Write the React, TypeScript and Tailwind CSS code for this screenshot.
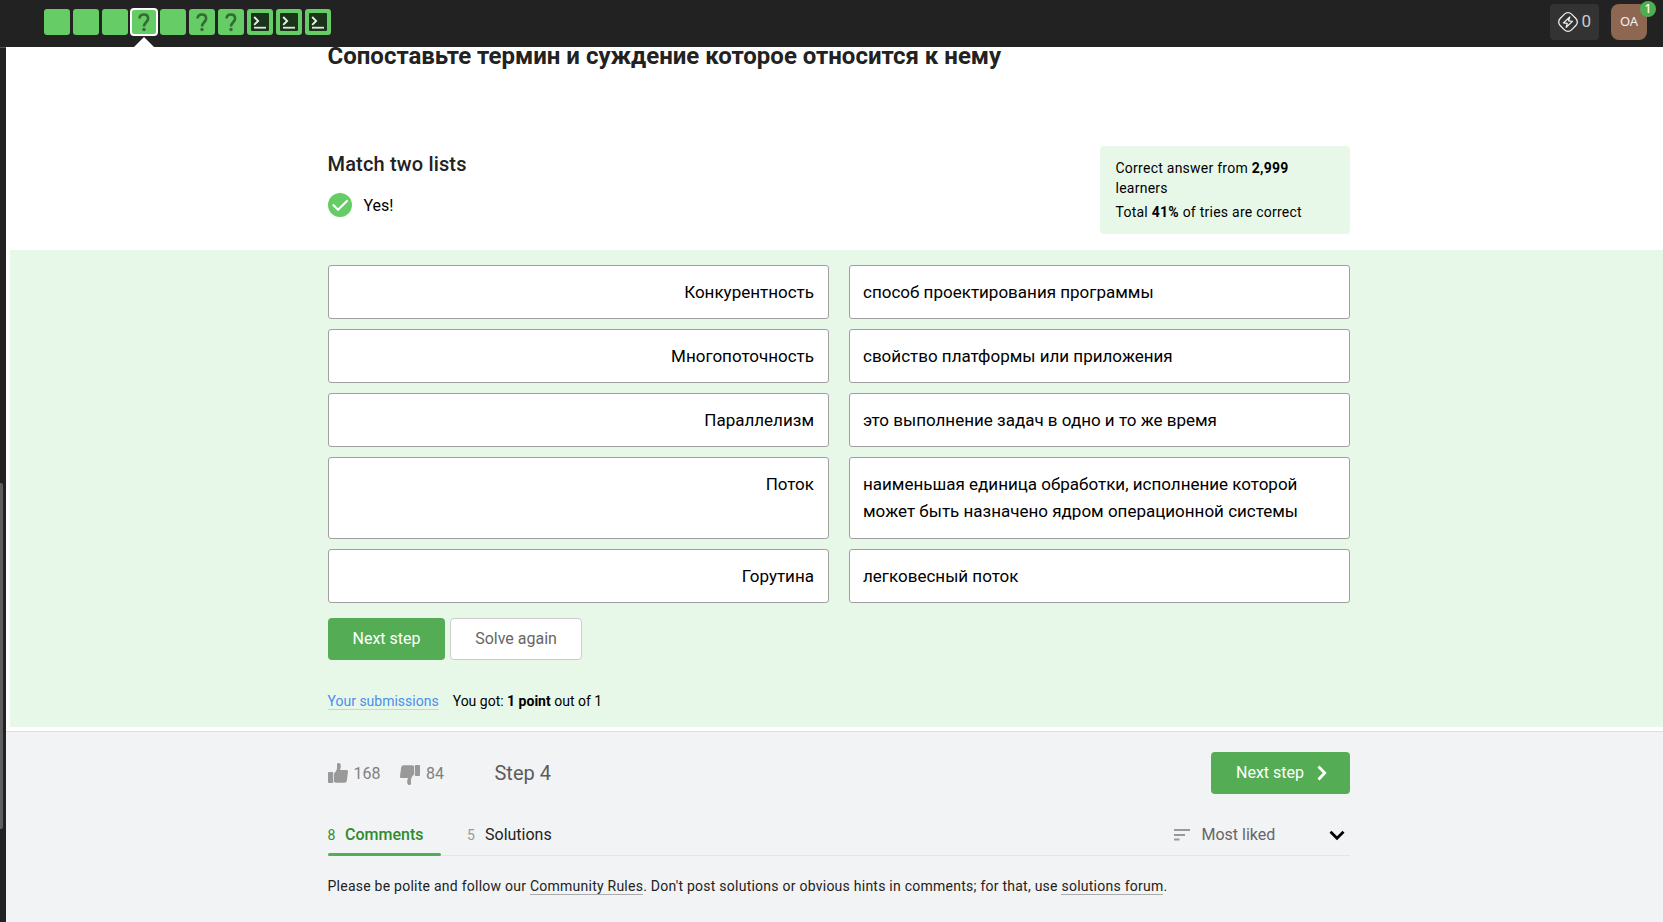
import type { ReactNode } from 'react';

type StepKind = 'text' | 'quiz' | 'code';

const steps: { kind: StepKind; active?: boolean }[] = [
  { kind: 'text' },
  { kind: 'text' },
  { kind: 'text' },
  { kind: 'quiz', active: true },
  { kind: 'text' },
  { kind: 'quiz' },
  { kind: 'quiz' },
  { kind: 'code' },
  { kind: 'code' },
  { kind: 'code' },
];

const pairs = [
  ['Конкурентность', 'способ проектирования программы'],
  ['Многопоточность', 'свойство платформы или приложения'],
  ['Параллелизм', 'это выполнение задач в одно и то же время'],
  ['Поток', 'наименьшая единица обработки, исполнение которой может быть назначено ядром операционной системы'],
  ['Горутина', 'легковесный поток'],
];

function StepIcon({ kind }: { kind: StepKind }) {
  if (kind === 'quiz') {
    return (
      <svg width="26" height="26" viewBox="0 0 26 26" fill="none" stroke="#336b33" strokeWidth="2.600">
        <path d="M8.600 9.600C8.600 6.900 10.200 5.500 12.900 5.500s4.200 1.400 4.200 3.900c0 3.700-4.100 4-4.100 8.100" />
        <circle cx="13" cy="20.500" r="1.700" fill="#336b33" stroke="none" />
      </svg>
    );
  }
  if (kind === 'code') {
    return (
      <svg width="26" height="26" viewBox="0 0 26 26" fill="none">
        <rect x="4" y="4" width="18" height="18" rx="1" fill="#1a3319" />
        <path d="M7.200 8l3.900 3.900-3.900 3.900" stroke="#e9f3e9" strokeWidth="1.900" />
        <path d="M7 18.700h12" stroke="#dfe8df" strokeWidth="1.800" />
      </svg>
    );
  }
  return null;
}

function StepTile({ kind, active }: { kind: StepKind; active?: boolean }) {
  return (
    <div
      className={
        active
          ? 'relative size-[26px] rounded-[3px] bg-[#66cc66] outline-2 -outline-offset-1 outline-white'
          : 'size-[26px] rounded-[3px] bg-[#66cc66]'
      }
    >
      <StepIcon kind={kind} />
      {active && (
        <svg className="absolute top-[28px] left-[3px]" width="20" height="10" viewBox="0 0 20 10">
          <path d="M0 10L10 0l10 10z" fill="#fff" />
        </svg>
      )}
    </div>
  );
}

function Thumb({ down }: { down?: boolean }) {
  return (
    <svg
      width="20"
      height="20"
      viewBox="0 0 20 20"
      fill="#999"
      className={down ? 'mt-[3px] rotate-180' : ''}
    >
      <path d="M1 9h3.400a.8.8 0 0 1 .8.800v9.400a.8.8 0 0 1-.8.800H1a1 1 0 0 1-1-1v-9a1 1 0 0 1 1-1z" />
      <path d="M6 10.400c1.800-1.600 3-3.400 3-5.400V1.500C9 .5 9.800 0 10.700 0c1.400 0 2.100 1.300 2.100 3 0 1.700-.5 3.200-.8 4h6.500c1 0 1.600.8 1.500 1.700l-1.200 9c-.2 1.200-1 2-2.200 2H8.500c-1 0-1.700-.3-2.500-.8z" />
    </svg>
  );
}

function Link({ children }: { children: ReactNode }) {
  return <a className="border-b border-[#aaabad]">{children}</a>;
}

export default function App() {
  return (
    <div className="flex h-[922px] w-[1663px] flex-col overflow-hidden bg-white font-['Roboto',sans-serif] text-[#222]">
      <header className="flex h-[47px] shrink-0 items-start justify-between bg-[#222] pr-4 pl-11">
        <nav className="flex gap-[3px] pt-[9px]">
          {steps.map((s, i) => (
            <StepTile key={i} kind={s.kind} active={s.active} />
          ))}
        </nav>
        <div className="flex gap-3 pt-1">
          <div className="flex h-9 w-[49px] items-center gap-[3.5px] rounded bg-[#333] pl-2 text-[#ccc]">
            <svg width="20" height="20" viewBox="0 0 20 20" fill="none" stroke="#eee" strokeWidth="1.300" strokeLinejoin="round">
              <rect x="1.950" y="1.950" width="16.100" height="16.100" rx="5" transform="rotate(45 10 10)" />
              <path d="M11.800 5L5.400 10.900l3.800.5L8.200 15.300l6.200-5.900-3.800-.5z" />
            </svg>
            <span className="text-[17px]">0</span>
          </div>
          <div className="relative flex size-9 items-center justify-center rounded-lg bg-[#8d6752] font-['Noto_Sans',sans-serif] text-[13px] text-[#f4f0ee]">
            OA
            <span className="absolute -top-[3px] -right-[9px] flex size-4 items-center justify-center rounded-full bg-[#4caf50] text-[12px] font-medium text-white">
              1
            </span>
          </div>
        </div>
      </header>

      <div className="flex min-h-0 flex-1">
        <aside className="w-[6px] shrink-0 border-t border-[#555] bg-[#222] pt-[435px]">
          <div className="h-[346px] w-[3px] rounded-r-[2px] bg-[#5e5e5e]" />
        </aside>

        <main className="flex min-w-0 flex-1 flex-col">
          <section className="flex h-[203px] justify-between pr-[313.5px] pl-[321.5px]">
            <div>
              <h1 className="-mt-[7px] text-[24px] leading-8 font-bold">
                Сопоставьте термин и суждение которое относится к нему
              </h1>
              <h2 className="mt-[78px] text-xl leading-[28px] font-medium tracking-[0.16px]">Match two lists</h2>
              <div className="mt-[14px] flex items-center gap-3 text-base text-black">
                <svg width="24" height="24" viewBox="0 0 25 25" fill="none">
                  <circle cx="12.500" cy="12.500" r="12.500" fill="#66cc66" />
                  <path d="M5 12l5.500 5.500L20.500 7.500" stroke="#fff" strokeWidth="2.200" />
                </svg>
                <span className="pt-[2px]">Yes!</span>
              </div>
            </div>
            <div className="mt-[99px] h-[88px] w-[250px] shrink-0 rounded bg-[#e7f8e9] px-4 pt-3 text-sm leading-5 tracking-[0.25px] text-black">
              <p>
                Correct answer from <b>2,999</b> learners
              </p>
              <p className="mt-1">
                Total <b>41%</b> of tries are correct
              </p>
            </div>
          </section>

          <section className="ml-1 flex h-[477px] flex-col bg-[#e7f8e9] pt-[15px] pr-[313px] pl-[317.5px] text-black">
            <div className="flex flex-col gap-[10px] pl-[0.5px]">
              {pairs.map(([term, text]) => (
                <div
                  key={term}
                  className={`grid grid-cols-2 gap-5 text-[17px] leading-[27px] ${text.length > 60 ? 'h-[82px]' : 'h-[54px]'}`}
                >
                  <div className="rounded-[3px] border border-[#a0a0a0] bg-white px-[14px] pt-[13px] text-right">
                    {term}
                  </div>
                  <div className="rounded-[3px] border border-[#a0a0a0] bg-white px-[13px] pt-[13px]">
                    {text}
                  </div>
                </div>
              ))}
            </div>
            <div className="mt-[15px] flex gap-[5px] pl-[0.5px] text-base">
              <button className="h-[42px] w-[117px] rounded bg-[#54ad54] text-white">Next step</button>
              <button className="h-[42px] w-[132px] rounded border border-[#ccc] bg-white text-[#666]">Solve again</button>
            </div>
            <div className="mt-[31px] flex gap-[14px] text-sm">
              <a className="h-[19px] border-b border-[#b5dcea] text-[#4c8dec]">Your submissions</a>
              <span>
                You got: <b>1 point</b> out of 1
              </span>
            </div>
          </section>

          <footer className="mt-1 flex-1 border-t border-[#dcdde0] bg-[#f2f3f5] pr-[313px] pl-[321.5px]">
            <div className="mt-5 flex h-[42px] items-center">
              <Thumb />
              <span className="ml-[6px] pt-[2px] text-base text-[#808080]">168</span>
              <span className="ml-[19.5px]">
                <Thumb down />
              </span>
              <span className="ml-[6px] pt-[2px] text-base text-[#808080]">84</span>
              <span className="ml-[50.5px] text-xl text-[#5c5c5c]">Step 4</span>
              <button className="ml-auto flex h-[42px] w-[139px] items-center rounded bg-[#54ad54] pl-[25px] text-base text-white">
                Next step
                <svg className="ml-[12.5px]" width="10" height="16" viewBox="0 0 10 16" fill="none" stroke="#fff" strokeWidth="2.800">
                  <path d="M1.500 1.500L7.700 8l-6.200 6.500" />
                </svg>
              </button>
            </div>
            <div className="mt-[19px] flex h-[43px] border-b border-[#e4e5e8] text-base">
              <div className="relative flex w-[113px] items-center pt-[2px] text-[#2e8b2e]">
                <span className="w-[17.5px] text-sm">8</span>
                <span className="font-medium">Comments</span>
                <span className="absolute inset-x-0 -bottom-px h-[3px] rounded-sm bg-[#54ad54]" />
              </div>
              <div className="ml-[26.5px] flex items-center pt-[2px]">
                <span className="w-[18px] text-sm text-[#999]">5</span>
                <span>Solutions</span>
              </div>
              <div className="ml-auto flex items-center pt-[2px] pr-[5px] text-[#666]">
                <svg width="16" height="12" viewBox="0 0 16 12" fill="#999">
                  <path d="M0 0h16v2H0zM0 5h11v2H0zM0 9.500h5.500v2H0z" />
                </svg>
                <span className="ml-3 w-[127.5px]">Most liked</span>
                <svg width="16" height="11" viewBox="0 0 16 11" fill="none" stroke="#000" strokeWidth="2.800">
                  <path d="M1.500 1.800L8 8.300l6.500-6.500" />
                </svg>
              </div>
            </div>
            <p className="mt-5 text-sm tracking-[0.245px]">
              Please be polite and follow our <Link>Community Rules</Link>. Don't post solutions or obvious hints in
              comments; for that, use <Link>solutions forum</Link>.
            </p>
          </footer>
        </main>
      </div>
    </div>
  );
}
